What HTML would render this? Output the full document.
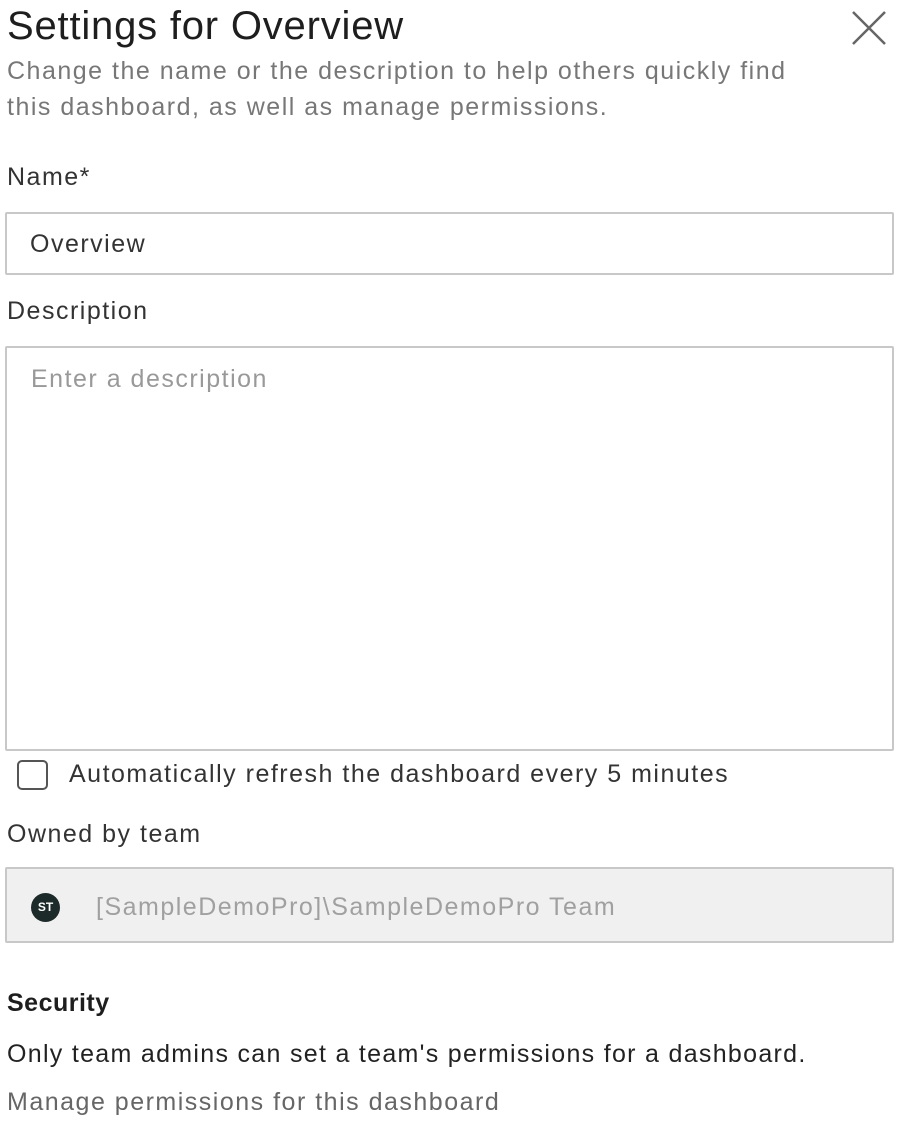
<!DOCTYPE html>
<html><head><meta charset="utf-8"><style>
body{margin:0;width:900px;height:1123px;background:#fff;font-family:"Liberation Sans",sans-serif;color:#222;position:relative;overflow:hidden}
.t{position:absolute;white-space:nowrap;line-height:1;font-size:25px;letter-spacing:1.5px}
.b{position:absolute;box-sizing:border-box;border:2px solid #c8c8c8;border-radius:2px}
</style></head><body>
<div class="t" style="left:7px;top:6px;font-size:40px;letter-spacing:0.8px;color:#1e1e1e">Settings for Overview</div>
<svg style="position:absolute;left:850px;top:9px" width="38" height="38"><path d="M3 3L35 35M35 3L3 35" stroke="#666" stroke-width="2.5" fill="none"/></svg>
<div class="t" style="left:7px;top:59px;color:#777">Change the name or the description to help others quickly find</div>
<div class="t" style="left:7px;top:95px;color:#777">this dashboard, as well as manage permissions.</div>
<div class="t" style="left:7px;top:165px;color:#333">Name*</div>
<div class="b" style="left:5px;top:212px;width:889px;height:63px"></div>
<div class="t" style="left:30px;top:232px;color:#333">Overview</div>
<div class="t" style="left:7px;top:299px;color:#333">Description</div>
<div class="b" style="left:5px;top:346px;width:889px;height:405px"></div>
<div class="t" style="left:31px;top:367px;color:#999">Enter a description</div>
<div class="b" style="left:17px;top:760px;width:31px;height:30px;border-color:#555;border-radius:5px"></div>
<div class="t" style="left:69px;top:762px;color:#333">Automatically refresh the dashboard every 5 minutes</div>
<div class="t" style="left:7px;top:822px;color:#333">Owned by team</div>
<div class="b" style="left:5px;top:867px;width:889px;height:76px;background:#f0f0f0"></div>
<div style="position:absolute;left:31px;top:893px;width:29px;height:29px;border-radius:50%;background:#1d2a2a;color:#fff;font-size:12px;font-weight:bold;text-align:center;line-height:29px">ST</div>
<div class="t" style="left:96px;top:895px;color:#a0a0a0">[SampleDemoPro]\SampleDemoPro Team</div>
<div class="t" style="left:7px;top:991px;font-weight:bold;color:#1e1e1e;letter-spacing:0.5px">Security</div>
<div class="t" style="left:7px;top:1042px;color:#222;letter-spacing:1.3px">Only team admins can set a team's permissions for a dashboard.</div>
<div class="t" style="left:7px;top:1090px;color:#666">Manage permissions for this dashboard</div>
</body></html>
